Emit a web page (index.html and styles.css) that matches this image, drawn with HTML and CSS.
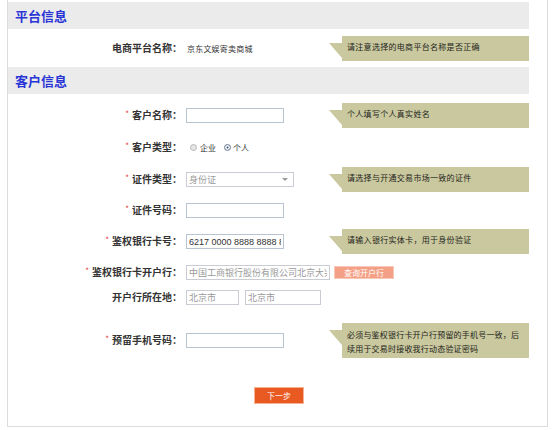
FILE: index.html
```html
<!DOCTYPE html>
<html lang="zh-CN">
<head>
<meta charset="utf-8">
<title>平台信息</title>
<link rel="stylesheet" href="styles.css">
</head>
<body>
<div class="panel">
  <div class="sec-head">平台信息</div>
  <div class="row h38">
    <div class="label">电商平台名称：</div>
    <div class="field"><span class="value">京东文娱寄卖商城</span></div>
    <div class="tip"><div class="bubble">请注意选择的电商平台名称是否正确</div></div>
  </div>

  <div class="sec-head">客户信息</div>
  <div class="sec-body">
    <div class="row h32">
      <div class="label"><span class="req">*</span>客户名称：</div>
      <div class="field"><input class="txt" type="text"></div>
      <div class="tip"><div class="bubble">个人填写个人真实姓名</div></div>
    </div>
    <div class="row h32">
      <div class="label"><span class="req">*</span>客户类型：</div>
      <div class="field radios">
        <span class="radio"></span><span class="opt">企业</span>
        <span class="radio on"></span><span class="opt">个人</span>
      </div>
    </div>
    <div class="row h32">
      <div class="label"><span class="req">*</span>证件类型：</div>
      <div class="field"><div class="select"><span>身份证</span><span class="caret"></span></div></div>
      <div class="tip"><div class="bubble">请选择与开通交易市场一致的证件</div></div>
    </div>
    <div class="row h31">
      <div class="label"><span class="req">*</span>证件号码：</div>
      <div class="field"><input class="txt" type="text"></div>
    </div>
    <div class="row h31">
      <div class="label"><span class="req">*</span>鉴权银行卡号：</div>
      <div class="field"><input class="txt num" type="text" value="6217 0000 8888 8888 8888"></div>
      <div class="tip"><div class="bubble">请输入银行实体卡，用于身份验证</div></div>
    </div>
    <div class="row h30">
      <div class="label"><span class="req">*</span>鉴权银行卡开户行：</div>
      <div class="field wide">
        <input class="txt bank dis" type="text" value="中国工商银行股份有限公司北京大兴支行" disabled>
        <button class="query" type="button">查询开户行</button>
      </div>
    </div>
    <div class="row h20">
      <div class="label">开户行所在地：</div>
      <div class="field wide">
        <input class="txt city dis" type="text" value="北京市" disabled>
        <input class="txt city2 dis" type="text" value="北京市" disabled>
      </div>
    </div>
    <div class="row h66">
      <div class="label"><span class="req">*</span>预留手机号码：</div>
      <div class="field"><input class="txt" type="text"></div>
      <div class="tip"><div class="bubble two">必须与鉴权银行卡开户行预留的手机号一致，后<br>续用于交易时接收我行动态验证密码</div></div>
    </div>
  </div>
  <div class="actions"><button class="next" type="button">下一步</button></div>
</div>
</body>
</html>
```

FILE: styles.css
```css
* { box-sizing: border-box; }
html, body { margin: 0; padding: 0; background: #fff; }
body {
  font-family: "Noto Sans CJK SC", "Liberation Sans", sans-serif;
  color: #333;
}
.panel {
  margin-left: 7px;
  width: 541px;
  height: 427px;
  padding-top: 2px;
  border: 1px solid #dcdcdc;
  border-top: none;
}
.sec-head {
  width: 521px;
  height: 27px;
  background: #ebebeb;
  color: #2a35d6;
  font-size: 13px;
  font-weight: bold;
  line-height: 27px;
  padding-left: 7px;
}
.sec-head + .sec-body { padding-top: 5px; }
.row {
  display: grid;
  grid-template-columns: 174px 143px 200px;
  column-gap: 4px;
  align-items: center;
  width: 525px;
}
.h38 { height: 38px; }
.h32 { height: 32px; }
.h31 { height: 31px; }
.h30 { height: 30px; }
.h20 { height: 20px; }
.h66 { height: 66px; }
.label {
  grid-column: 1;
  text-align: right;
  font-size: 10px;
  font-weight: bold;
  color: #333;
  line-height: 14px;
  white-space: nowrap;
}
.req {
  color: #e0383b;
  font-size: 8px;
  font-weight: normal;
  margin-right: 3px;
  position: relative;
  top: -2px;
}
.field {
  grid-column: 2;
  display: flex;
  align-items: center;
  font-size: 8px;
}
.field.wide { grid-column: 2 / 4; }
.value { padding-left: 1px; font-size: 8px; color: #333; letter-spacing: 0.2px; }
.tip { grid-column: 3; }
.bubble {
  position: relative;
  margin-left: 9px;
  width: 187px;
  height: 25px;
  background: #c9c89e;
  font-size: 8px;
  line-height: 14px;
  letter-spacing: 0.3px;
  color: #24241c;
  padding: 4px 4px 0 5px;
  white-space: nowrap;
}
.bubble::before {
  content: "";
  position: absolute;
  left: -13px;
  top: 7px;
  border-top: 15px solid #c9c89e;
  border-left: 13px solid transparent;
}
.bubble.two { height: 35px; padding-top: 5px; letter-spacing: 0.2px; }
.txt {
  width: 98px;
  height: 15px;
  border: 1px solid #b9c4d2;
  background: #fff;
  padding: 0 2px;
  margin: 0;
  font-family: "Liberation Sans", "Noto Sans CJK SC", sans-serif;
  font-size: 9px;
  color: #333;
  outline: none;
}
.txt.num { font-size: 9px; }
.txt.dis { color: #9a9a9a; border-color: #c9cdd3; background: #fff; font-family: "Noto Sans CJK SC", sans-serif; }
.txt.bank { width: 144px; }
.txt.city { width: 53px; }
.txt.city2 { width: 76px; margin-left: 6px; }
.query {
  margin-left: 4px;
  width: 60px;
  height: 13px;
  border: 1px solid #f8c9b8;
  background: #f4a086;
  color: #fff;
  font-family: "Noto Sans CJK SC", sans-serif;
  font-size: 8px;
  line-height: 11px;
  padding: 0;
}
.select {
  width: 108px;
  height: 15px;
  border: 1px solid #c9cdd3;
  display: flex;
  align-items: center;
  justify-content: space-between;
  padding: 0 5px 0 2px;
  font-size: 9px;
  color: #9a9a9a;
}
.caret {
  width: 0;
  height: 0;
  border-left: 3px solid transparent;
  border-right: 3px solid transparent;
  border-top: 3px solid #999;
}
.radios { padding-left: 4px; }
.radio {
  width: 7px;
  height: 7px;
  border-radius: 50%;
  border: 1px solid #b8b8b8;
  background: #e6e6e6;
  margin-right: 3px;
  display: inline-block;
}
.radio.on {
  background: #fff;
  border-color: #6f7f98;
  box-shadow: inset 0 0 0 1.5px #fff, inset 0 0 0 4px #3b4d7a;
  margin-left: 8px;
  margin-right: 2px;
}
.opt { font-size: 8px; color: #333; }
.actions {
  display: flex;
  padding-left: 246px;
  padding-top: 14px;
}
.next {
  width: 50px;
  height: 17px;
  background: #e95a22;
  border: 1px solid #f6b293;
  color: #fff;
  font-family: "Noto Sans CJK SC", sans-serif;
  font-size: 8px;
  padding: 0;
}
```
